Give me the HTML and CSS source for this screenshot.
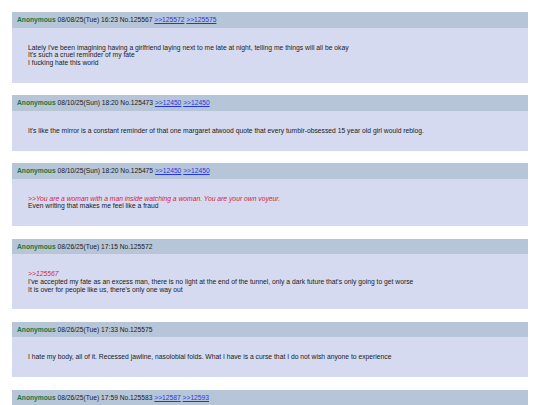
FILE: index.html
```html
<!DOCTYPE html>
<html lang="en">
<head>
  <meta charset="UTF-8" />
  <title>Thread</title>
  <meta name="viewport" content="width=device-width, initial-scale=1.0" />
  <link rel="stylesheet" href="styles.css">
</head>
<body>

  <div class="thread">

    <div class="post">
      <div class="post-head">
        <span class="name">Anonymous</span> 08/08/25(Tue) 16:23 No.125567
        <a href="#">&gt;&gt;125572</a> <a href="#">&gt;&gt;125575</a>
      </div>
      <div class="post-body">
        Lately I've been imagining having a girlfriend laying next to me late at night, telling me things will all be okay<br>
        It's such a cruel reminder of my fate<br>
        I fucking hate this world
      </div>
    </div>

    <div class="post">
      <div class="post-head">
        <span class="name">Anonymous</span> 08/10/25(Sun) 18:20 No.125473
        <a href="#">&gt;&gt;12450</a> <a href="#">&gt;&gt;12450</a>
      </div>
      <div class="post-body">
        It's like the mirror is a constant reminder of that one margaret atwood quote that every tumblr-obsessed 15 year old girl would reblog.
      </div>
    </div>

    <div class="post">
      <div class="post-head">
        <span class="name">Anonymous</span> 08/10/25(Sun) 18:20 No.125475
        <a href="#">&gt;&gt;12450</a> <a href="#">&gt;&gt;12450</a>
      </div>
      <div class="post-body">
        <span class="quote">&gt;&gt;You are a woman with a man inside watching a woman. You are your own voyeur.</span><br>
        Even writing that makes me feel like a fraud
      </div>
    </div>

    <div class="post">
      <div class="post-head">
        <span class="name">Anonymous</span> 08/26/25(Tue) 17:15 No.125572
      </div>
      <div class="post-body">
        <span class="quote">&gt;&gt;125567</span><br>
        I've accepted my fate as an excess man, there is no light at the end of the tunnel, only a dark future that's only going to get worse<br>
        It is over for people like us, there's only one way out
      </div>
    </div>

    <div class="post">
      <div class="post-head">
        <span class="name">Anonymous</span> 08/26/25(Tue) 17:33 No.125575
      </div>
      <div class="post-body">
        I hate my body, all of it. Recessed jawline, nasolobial folds. What I have is a curse that I do not wish anyone to experience
      </div>
    </div>

    <div class="post">
      <div class="post-head">
        <span class="name">Anonymous</span> 08/26/25(Tue) 17:59 No.125583
        <a href="#">&gt;&gt;12587</a> <a href="#">&gt;&gt;12593</a>
      </div>
      <div class="post-body">
        &nbsp;
      </div>
    </div>

  </div>

</body>
</html>
```

FILE: styles.css
```css
body {
  margin: 0;
  background: #ffffff;
  font-family: "Liberation Sans", Arial, sans-serif;
  color: #1a1a1a;
}

.thread {
  padding: 12px;
}

.post {
  margin-bottom: 12.5px;
  background: #d6daf0;
}

.post-head {
  background: #b7c5d9;
  height: 15.5px;
  line-height: 15.5px;
  padding-left: 5px;
  font-size: 6.7px;
  white-space: nowrap;
}

.name {
  color: #117743;
  font-weight: bold;
}

.post-head a {
  color: #2438e0;
  text-decoration: underline;
}

.post-body {
  padding: 16px;
  font-size: 6.75px;
  line-height: 7.75px;
}

.quote {
  color: #d0243c;
  font-style: italic;
}
```
